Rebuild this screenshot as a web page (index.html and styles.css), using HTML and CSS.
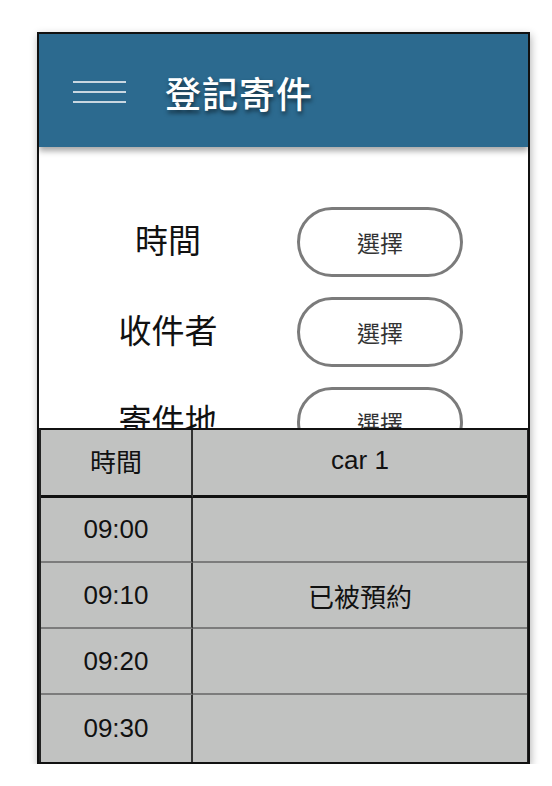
FILE: index.html
```html
<!DOCTYPE html>
<html lang="zh-Hant">
<head>
<meta charset="utf-8">
<title>登記寄件</title>
<link rel="stylesheet" href="styles.css">
</head>
<body>
<div class="frame">
  <header class="appbar">
    <span class="menu" aria-label="menu"><i></i><i></i><i></i></span>
    <h1 class="title">登記寄件</h1>
  </header>
  <section class="form">
    <div class="row"><span class="label">時間</span><button class="pick">選擇</button></div>
    <div class="row"><span class="label">收件者</span><button class="pick">選擇</button></div>
    <div class="row"><span class="label">寄件地</span><button class="pick">選擇</button></div>
  </section>
  <section class="sched">
    <div class="cell head time">時間</div>
    <div class="cell head car">car 1</div>
    <div class="cell time r1">09:00</div>
    <div class="cell car r1"></div>
    <div class="cell time r2">09:10</div>
    <div class="cell car r2">已被預約</div>
    <div class="cell time r3">09:20</div>
    <div class="cell car r3"></div>
    <div class="cell time r4">09:30</div>
    <div class="cell car r4"></div>
  </section>
</div>
</body>
</html>
```

FILE: styles.css
```css
* { box-sizing: border-box; }
html, body { margin: 0; padding: 0; background: #fff; }
body {
  font-family: "Liberation Sans", "Noto Sans CJK TC", sans-serif;
  color: #111;
}
.frame {
  margin: 32px 0 0 37px;
  width: 493px;
  height: 732px;
  border: 2px solid #111;
  display: flex;
  flex-direction: column;
  overflow: hidden;
  box-shadow: 1px 3px 8px rgba(0,0,0,0.3);
  background: #fff;
}
.appbar {
  position: relative;
  z-index: 2;
  height: 113px;
  flex: none;
  background: #2c6a8f;
  display: flex;
  align-items: center;
  padding: 3px 0 0 34px;
  box-shadow: 0 4px 6px rgba(0,0,0,0.35);
}
.menu {
  display: flex;
  flex-direction: column;
  gap: 8px;
  width: 53px;
  margin-right: 39px;
}
.menu i {
  display: block;
  height: 2px;
  background: #c9d7e1;
}
.title {
  margin: 0;
  font-family: "Noto Sans CJK TC", sans-serif;
  font-size: 36px;
  font-weight: 500;
  color: #fff;
  letter-spacing: 1px;
  text-shadow: 1px 3px 4px rgba(0,0,0,0.55);
}
.form {
  height: 281px;
  flex: none;
  overflow: hidden;
  padding-top: 60px;
  display: flex;
  flex-direction: column;
  gap: 20px;
}
.row {
  display: flex;
  align-items: center;
  flex: none;
}
.label {
  width: 258px;
  text-align: center;
  font-family: "Noto Sans CJK TC", sans-serif;
  font-size: 33px;
  line-height: 1;
  padding-bottom: 6px;
  color: #111;
}
.pick {
  width: 166px;
  height: 70px;
  border: 3px solid #7b7b7b;
  border-radius: 35px;
  background: #fff;
  font-family: "Noto Sans CJK TC", sans-serif;
  font-size: 23px;
  color: #333;
  padding: 0;
}
.sched {
  flex: 1;
  display: grid;
  grid-template-columns: 152px 1fr;
  grid-template-rows: 68px 65px 66px 66px 1fr;
  background: #c1c2c1;
  border-top: 2px solid #111;
  border-left: 2px solid #222;
  border-right: 1px solid #222;
}
.cell {
  display: flex;
  align-items: center;
  justify-content: center;
  font-family: "Liberation Sans", "Noto Sans CJK TC", sans-serif;
  font-size: 26px;
  color: #111;
  border-bottom: 2px solid #7c7c7c;
}
.time { border-right: 2px solid #333; }
.head { border-bottom: 3px solid #111; padding-bottom: 4px; }
.r4 { border-bottom: none; }
```
